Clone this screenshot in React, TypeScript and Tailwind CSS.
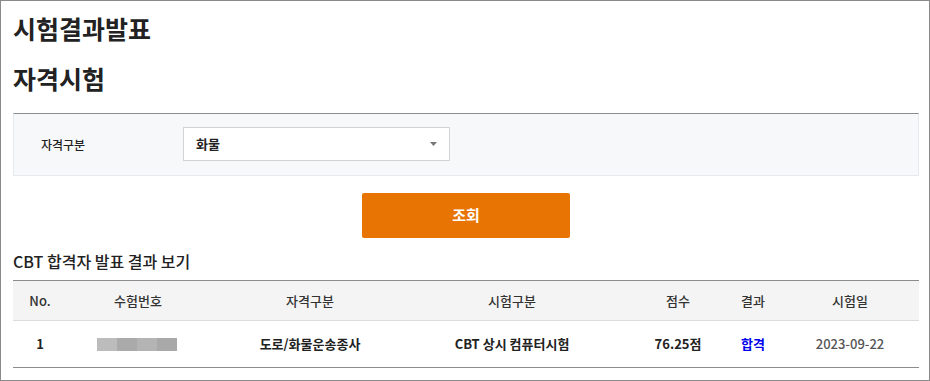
import React from 'react';

const headers = ['No.', '수험번호', '자격구분', '시험구분', '점수', '결과', '시험일'];

export default function App() {
    return (
        <div
            className="w-[930px] h-[381px] border border-[#8a8a8a] bg-white pl-[12px] pr-[10px] overflow-hidden text-[#222]"
            style={{ fontFamily: '"Noto Sans CJK KR", "Noto Sans", sans-serif' }}
        >
            {/* TITLES */}
            <h1 className="mt-[11px] text-[25px] leading-[32px] font-bold text-[#222]">시험결과발표</h1>
            <h2 className="mt-[18px] text-[25px] leading-[32px] font-bold text-[#222]">자격시험</h2>

            {/* FILTER */}
            <div className="mt-[19px] h-[63px] w-[906px] bg-[#f7f8fa] border-t border-t-[#8c8c8c] border-x border-b border-x-[#e6e9ed] border-b-[#e6e9ed] flex items-center pl-[27px]">
                <span className="w-[142px] text-[12px] font-medium text-[#222]">자격구분</span>
                <div className="w-[267px] h-[34px] -mt-[1px] bg-white border border-[#d3d3d3] flex items-center justify-between pl-[12px] pr-[12px]">
                    <span className="text-[13px] font-bold text-[#222]">화물</span>
                    <svg width="7" height="4" viewBox="0 0 7 4">
                        <path d="M0 0 H7 L3.5 4 Z" fill="#777" />
                    </svg>
                </div>
            </div>

            {/* SEARCH BUTTON */}
            <div className="flex justify-center w-[906px] mt-[17px]">
                <button className="w-[208px] h-[45px] rounded-[2px] bg-[#e87503] text-white text-[15px] font-bold">
                    조회
                </button>
            </div>

            {/* RESULTS */}
            <h3 className="mt-[12px] text-[16px] leading-[22px] font-medium text-[#222]">CBT 합격자 발표 결과 보기</h3>

            <div className="mt-[8px] w-[906px] border-t border-t-[#8c8c8c] border-b border-b-[#8c8c8c]">
                <div className="grid grid-cols-[54px_142px_202px_220px_94px_56px_138px] h-[40px] items-center bg-[#f4f4f4] border-b border-b-[#dcdcdc] text-[13px] font-medium text-[#333]">
                    {headers.map((h, i) => (
                        <div key={h} className={i === 3 ? 'text-center pr-[18px]' : 'text-center'}>
                            {h}
                        </div>
                    ))}
                </div>
                <div className="grid grid-cols-[54px_142px_202px_220px_94px_56px_138px] h-[46px] items-center text-[13px] font-bold text-[#222]">
                    <div className="text-center">1</div>
                    <div className="flex justify-center pr-[2px]">
                        <div className="flex h-[13px]">
                            <div className="w-[20px] bg-[#bcbcbc]" />
                            <div className="w-[20px] bg-[#aaaaab]" />
                            <div className="w-[20px] bg-[#b4b4b4]" />
                            <div className="w-[20px] bg-[#a9a9a9]" />
                        </div>
                    </div>
                    <div className="text-center">도로/화물운송종사</div>
                    <div className="text-center pr-[18px]">CBT 상시 컴퓨터시험</div>
                    <div className="text-center">76.25점</div>
                    <div className="text-center text-[#0000ee]">합격</div>
                    <div className="text-center font-medium text-[#555]">2023-09-22</div>
                </div>
            </div>
        </div>
    );
}
